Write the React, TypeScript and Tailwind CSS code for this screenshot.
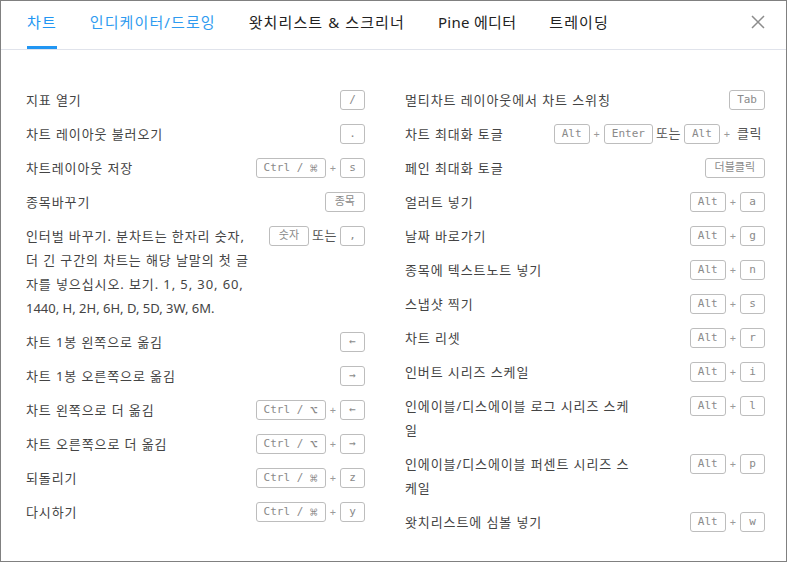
type Row = { label: string[]; keys: string[] }

const left: Row[] = [
  { label: ['지표 열기'], keys: ['/'] },
  { label: ['차트 레이아웃 불러오기'], keys: ['.'] },
  { label: ['차트레이아웃 저장'], keys: ['Ctrl / ⌘', '+', 's'] },
  { label: ['종목바꾸기'], keys: ['종목'] },
  {
    label: [
      '인터벌 바꾸기. 분차트는 한자리 숫자,',
      '더 긴 구간의 차트는 해당 날말의 첫 글',
      '자를 넣으십시오. 보기. 1, 5, 30, 60,',
      '1440, H, 2H, 6H, D, 5D, 3W, 6M.',
    ],
    keys: ['숫자', '또는', ','],
  },
  { label: ['차트 1봉 왼쪽으로 옮김'], keys: ['←'] },
  { label: ['차트 1봉 오른쪽으로 옮김'], keys: ['→'] },
  { label: ['차트 왼쪽으로 더 옮김'], keys: ['Ctrl / ⌥', '+', '←'] },
  { label: ['차트 오른쪽으로 더 옮김'], keys: ['Ctrl / ⌥', '+', '→'] },
  { label: ['되돌리기'], keys: ['Ctrl / ⌘', '+', 'z'] },
  { label: ['다시하기'], keys: ['Ctrl / ⌘', '+', 'y'] },
]

const right: Row[] = [
  { label: ['멀티차트 레이아웃에서 차트 스위칭'], keys: ['Tab'] },
  { label: ['차트 최대화 토글'], keys: ['Alt', '+', 'Enter', '또는', 'Alt', '+', '클릭'] },
  { label: ['페인 최대화 토글'], keys: ['더블클릭'] },
  { label: ['얼러트 넣기'], keys: ['Alt', '+', 'a'] },
  { label: ['날짜 바로가기'], keys: ['Alt', '+', 'g'] },
  { label: ['종목에 텍스트노트 넣기'], keys: ['Alt', '+', 'n'] },
  { label: ['스냅샷 찍기'], keys: ['Alt', '+', 's'] },
  { label: ['차트 리셋'], keys: ['Alt', '+', 'r'] },
  { label: ['인버트 시리즈 스케일'], keys: ['Alt', '+', 'i'] },
  { label: ['인에이블/디스에이블 로그 시리즈 스케', '일'], keys: ['Alt', '+', 'l'] },
  { label: ['인에이블/디스에이블 퍼센트 시리즈 스', '케일'], keys: ['Alt', '+', 'p'] },
  { label: ['왓치리스트에 심볼 넣기'], keys: ['Alt', '+', 'w'] },
]

const tabs = ['차트', '인디케이터/드로잉', '왓치리스트 & 스크리너', 'Pine 에디터', '트레이딩']

// ⌘ / ⌥ 기호는 조금 크게
function KeyText({ k }: { k: string }) {
  const m = k.match(/^(.*?)([⌘⌥])$/)
  if (!m) return <>{k}</>
  return (
    <>
      {m[1]}
      <span className="text-[13px] leading-none">{m[2]}</span>
    </>
  )
}

function Keys({ keys }: { keys: string[] }) {
  return (
    <div className="flex h-[24px] shrink-0 items-center">
      {keys.map((k, i) => {
        if (k === '+') {
          return (
            <span key={i} className="mx-[4px] text-[11px] text-[#9a9a9a]">
              +
            </span>
          )
        }
        if (k === '또는' || k === '클릭') {
          return (
            <span key={i} className="mx-[3px] text-[13px] tracking-[0.5px] text-[#555]">
              {k}
            </span>
          )
        }
        const hangul = /[가-힣]/.test(k)
        return (
          <span
            key={i}
            className={
              'flex h-[20px] min-w-[25px] items-center justify-center whitespace-pre rounded-[3px] border border-[#bdbdbd] text-[11px] text-[#8a8a8a] font-["DejaVu_Sans_Mono","Noto_Sans_CJK_KR",monospace] ' +
              (hangul ? 'px-[9px]' : 'px-[7px]')
            }
          >
            <KeyText k={k} />
          </span>
        )
      })}
    </div>
  )
}

function Column({ rows, className }: { rows: Row[]; className: string }) {
  return (
    <div className={className}>
      {rows.map((r, i) => (
        <div key={i} className="flex items-start justify-between py-[5px]">
          <div className="text-[13px] leading-[24px] text-[#444] whitespace-nowrap">
            {r.label.map((l, j) => (
              <div key={j} className={/[가-힣]/.test(l) ? 'tracking-[0.9px]' : 'tracking-normal'}>
                {l}
              </div>
            ))}
          </div>
          <Keys keys={r.keys} />
        </div>
      ))}
    </div>
  )
}

export default function App() {
  return (
    <div className="h-[562px] w-[787px] overflow-hidden border border-[#808080] bg-white font-['Noto_Sans','Noto_Sans_CJK_KR',sans-serif]">
      {/* 탭 헤더 */}
      <div className="flex h-[49px] items-start border-b border-[#e0e3eb] pl-[26px] pr-[21px]">
        <div className="flex h-[48px] gap-[33px]">
          {tabs.map((t, i) => (
            <div
              key={t}
              className={
                'h-[48px] pt-[11px] text-[15px] leading-[20px] ' +
                (t.startsWith('Pine') ? 'tracking-[0.3px] ' : 'tracking-[1.1px] ') +
                (i === 0
                  ? 'border-b-[3px] border-[#2196f3] text-[#2196f3]'
                  : i === 1
                    ? 'border-b-[3px] border-transparent text-[#2f9bf0]'
                    : 'border-b-[3px] border-transparent text-[#222]')
              }
            >
              {t}
            </div>
          ))}
        </div>
        <svg className="ml-auto mt-[14px]" width="14" height="14" viewBox="0 0 14 14">
          <path d="M1 1 L13 13 M13 1 L1 13" stroke="#8c8c8c" strokeWidth="1.5" fill="none" />
        </svg>
      </div>

      {/* 단축키 목록 */}
      <div className="flex gap-x-[40px] pl-[25px] pr-[21px] pt-[33px]">
        <Column rows={left} className="w-[339px]" />
        <Column rows={right} className="flex-1" />
      </div>
    </div>
  )
}
